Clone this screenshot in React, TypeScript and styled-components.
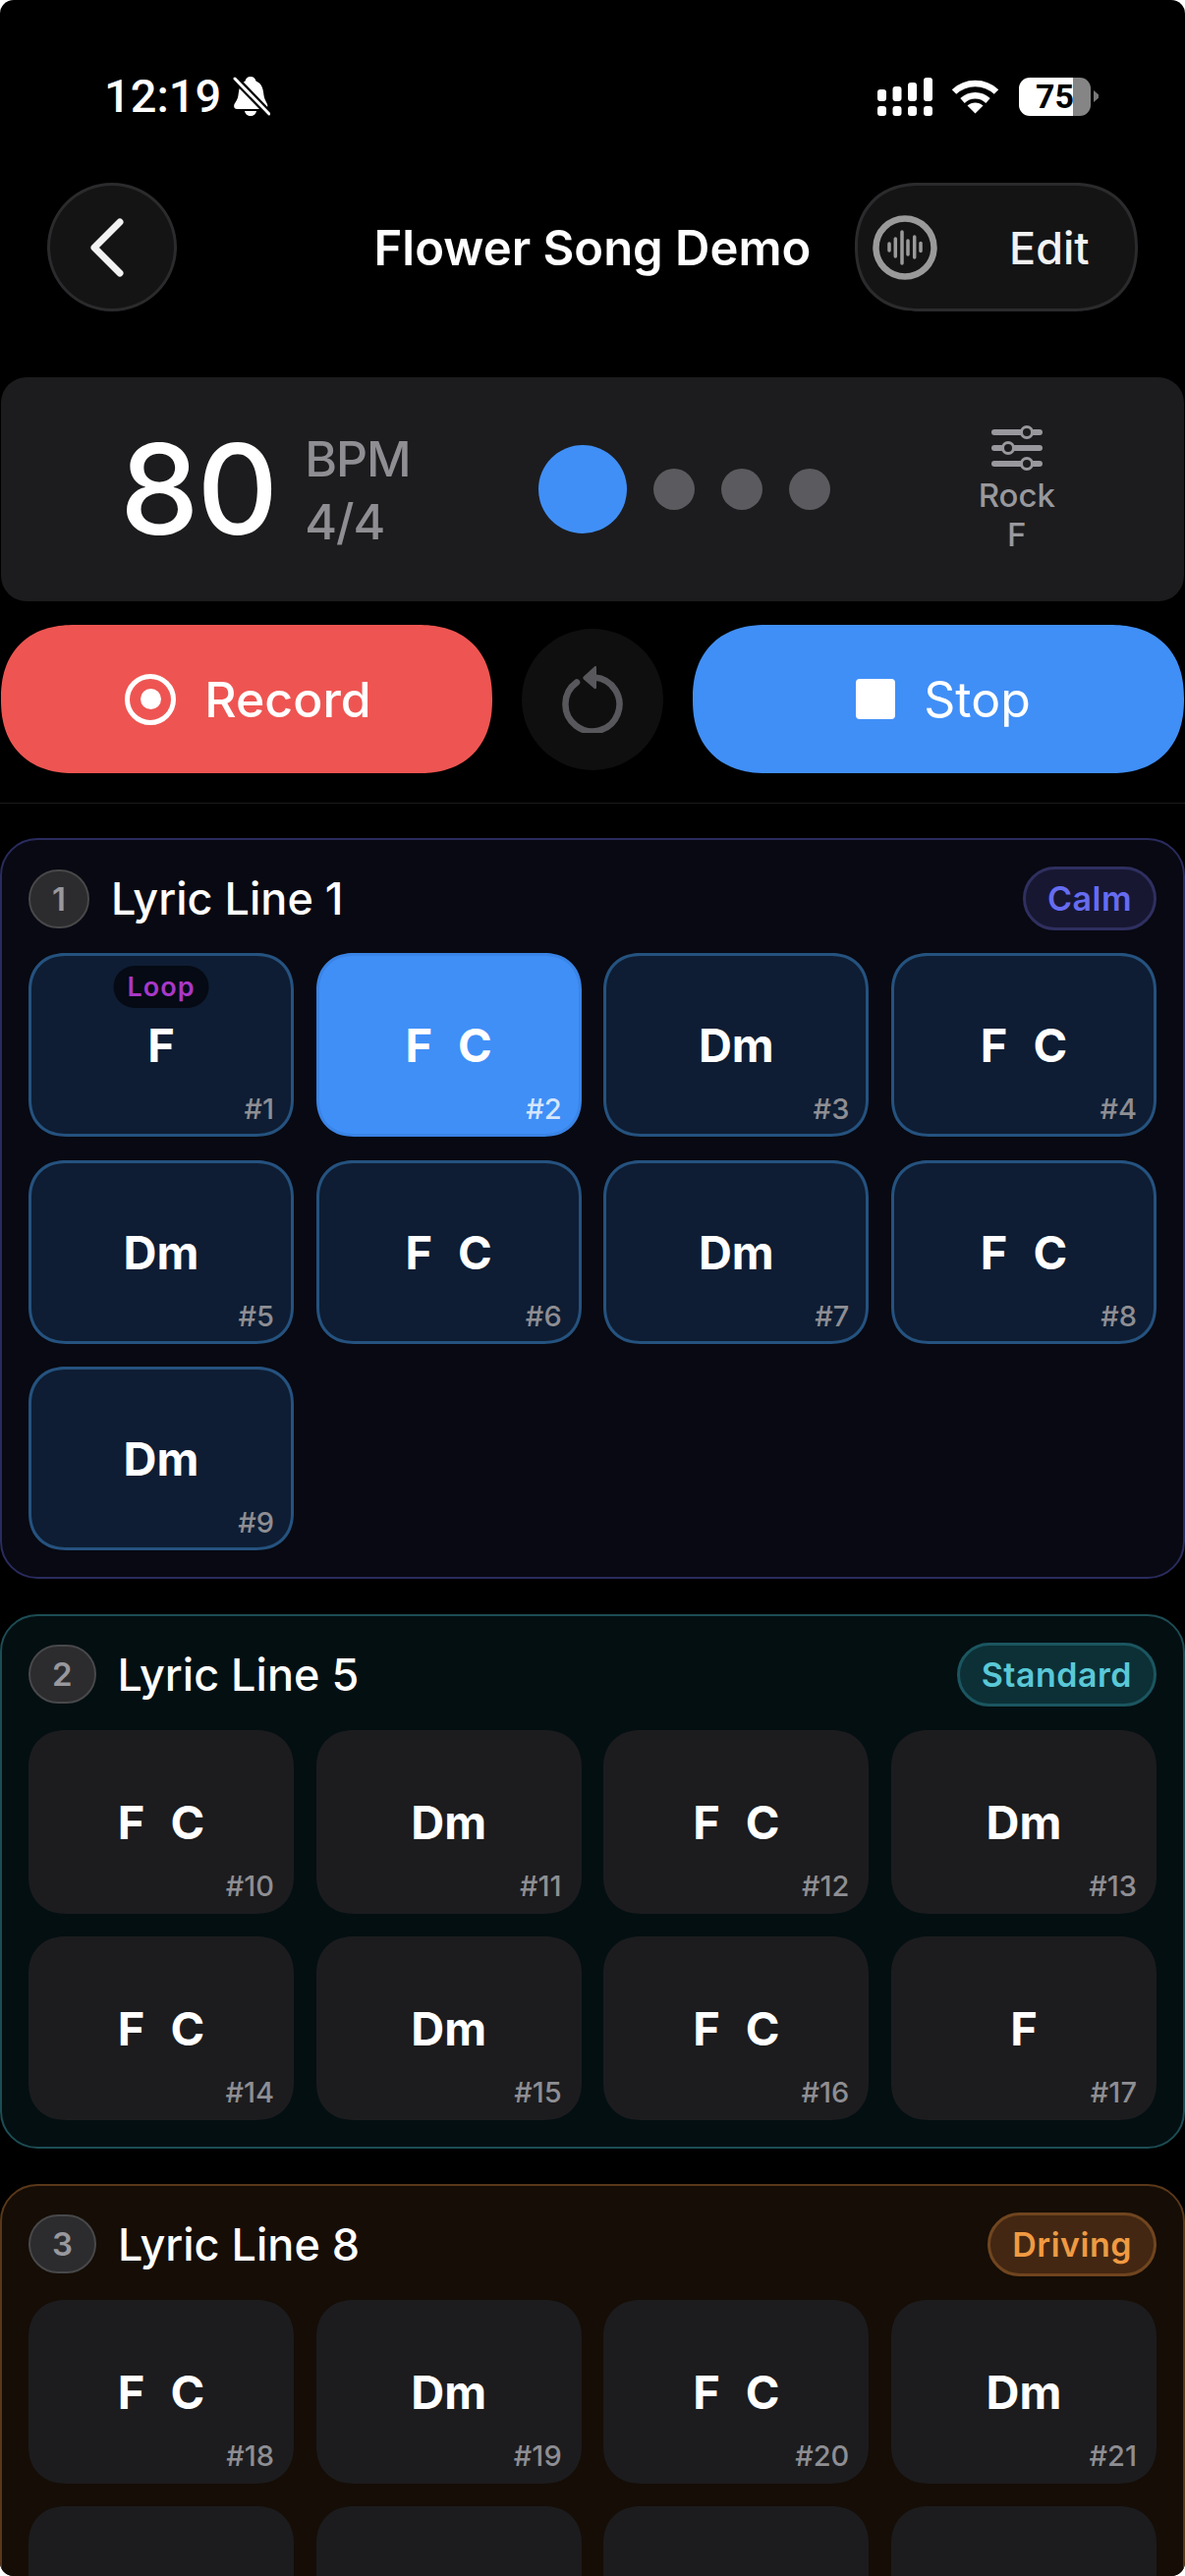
import React from 'react'
import styled, { createGlobalStyle } from 'styled-components'

type Tone = 'calm' | 'standard' | 'driving'

const tones = {
  calm: { bg: '#080912', line: '#2a2b5e', chipBg: '#171732', chipLine: '#2f2f60', chipText: '#666cf0' },
  standard: { bg: '#040f12', line: '#1c4d54', chipBg: '#0c3036', chipLine: '#1b5660', chipText: '#5ac8d6' },
  driving: { bg: '#150d06', line: '#5a3819', chipBg: '#432712', chipLine: '#70451f', chipText: '#f09a42' },
}

const sections: { title: string; tone: Tone; tag: string; start: number; chords: string[]; cue?: boolean }[] = [
  { title: 'Lyric Line 1', tone: 'calm', tag: 'Calm', start: 1, cue: true, chords: ['F', 'F C', 'Dm', 'F C', 'Dm', 'F C', 'Dm', 'F C', 'Dm'] },
  { title: 'Lyric Line 5', tone: 'standard', tag: 'Standard', start: 10, chords: ['F C', 'Dm', 'F C', 'Dm', 'F C', 'Dm', 'F C', 'F'] },
  { title: 'Lyric Line 8', tone: 'driving', tag: 'Driving', start: 18, chords: ['F C', 'Dm', 'F C', 'Dm', 'F C', 'Dm', 'F C', 'Dm'] },
]

const Global = createGlobalStyle`
  html, body {
    margin: 0;
    background: #fff;
  }
  * {
    box-sizing: border-box;
  }
`

const Screen = styled.div`
  width: 1206px;
  height: 2622px;
  overflow: hidden;
  background: #000;
  border-radius: 14px;
  color: #fff;
  font-family: Inter, 'Liberation Sans', sans-serif;
`

const StatusBar = styled.div`
  display: flex;
  justify-content: space-between;
  align-items: center;
  height: 40px;
  margin-top: 78px;
  padding: 0 88px 0 106px;
`

const StatusGroup = styled.div<{ $gap: number }>`
  display: flex;
  align-items: center;
  gap: ${p => p.$gap}px;
`

const Clock = styled.span`
  font-family: Roboto, sans-serif;
  font-size: 47px;
  font-weight: 500;
  line-height: 40px;
`

const Battery = styled.div`
  display: flex;
  align-items: center;
  gap: 3px;
  margin-left: 1px;
`

const BatteryBody = styled.div`
  width: 73px;
  height: 39px;
  padding-left: 17px;
  border-radius: 11px;
  background: linear-gradient(to right, #fff 75.5%, #858585 75.5%);
  color: #000;
  font-family: Roboto, sans-serif;
  font-size: 34px;
  font-weight: 700;
  line-height: 39px;
`

const BatteryNub = styled.span`
  width: 5px;
  height: 12px;
  background: #777;
  clip-path: polygon(0 0, 100% 35%, 100% 65%, 0 100%);
`

const Header = styled.header`
  display: grid;
  grid-template-columns: 1fr auto 1fr;
  align-items: center;
  height: 131px;
  margin-top: 68px;
  padding: 0 48px;
`

const BackButton = styled.button`
  display: flex;
  align-items: center;
  justify-content: center;
  width: 132px;
  height: 131px;
  padding: 0 10px 0 0;
  border: 3px solid #2b2b2d;
  border-radius: 50%;
  background: #141414;
`

const Title = styled.h1`
  margin: 0;
  padding-top: 2px;
  font-size: 49px;
  font-weight: 600;
  white-space: nowrap;
`

const EditPill = styled.button`
  justify-self: end;
  display: flex;
  align-items: center;
  width: 288px;
  height: 131px;
  padding: 0 0 0 15px;
  border: 3px solid #2b2b2d;
  border-radius: 65px;
  corner-shape: superellipse(1.15);
  background: #141414;
  color: #f2f2f2;
  font-family: inherit;
  font-size: 45px;
  font-weight: 500;
`

const EditLabel = styled.span`
  margin-left: 73px;
  padding-top: 2px;
`

const TempoPanel = styled.section`
  display: flex;
  align-items: center;
  height: 228px;
  margin: 67px 1px 0;
  padding: 0 131px 0 121px;
  border-radius: 26px;
  background: #1c1c1e;
`

const Tempo = styled.div`
  font-size: 128px;
  font-weight: 500;
  letter-spacing: -2px;
  line-height: 1;
`

const Meter = styled.div`
  display: flex;
  flex-direction: column;
  gap: 13px;
  margin: 2px 0 0 29px;
  color: #8e8e93;
  font-size: 50px;
  font-weight: 500;
  letter-spacing: -1px;
  line-height: 51px;
`

const Beats = styled.div`
  display: flex;
  align-items: center;
  gap: 27px;
  margin-left: 130px;
`

const Beat = styled.span<{ $on?: boolean }>`
  width: ${p => (p.$on ? 90 : 42)}px;
  height: ${p => (p.$on ? 90 : 42)}px;
  border-radius: 50%;
  background: ${p => (p.$on ? '#408ff7' : '#5a5a5f')};
`

const StyleInfo = styled.div`
  display: flex;
  flex-direction: column;
  align-items: center;
  margin-left: auto;
  color: #98989d;
  font-size: 33px;
  font-weight: 500;
  line-height: 40px;
`

const StyleIcon = styled.svg`
  margin-bottom: 5px;
`

const Transport = styled.div`
  display: flex;
  align-items: center;
  justify-content: space-between;
  height: 151px;
  margin-top: 24px;
  padding: 0 1px;
`

const BigButton = styled.button<{ $color: string; $weight: number; $nudge: number }>`
  display: flex;
  align-items: center;
  justify-content: center;
  gap: 29px;
  width: 500px;
  height: 151px;
  padding: 0 0 0 ${p => p.$nudge}px;
  border: 0;
  border-radius: 75px;
  corner-shape: superellipse(1.2);
  background: ${p => p.$color};
  color: #fff;
  font-family: inherit;
  font-size: 50px;
  font-weight: ${p => p.$weight};
`

const RecordRing = styled.span`
  display: flex;
  align-items: center;
  justify-content: center;
  width: 52px;
  height: 52px;
  border: 5px solid #fff;
  border-radius: 50%;

  &::after {
    content: '';
    width: 21px;
    height: 21px;
    border-radius: 50%;
    background: #fff;
  }
`

const StopSquare = styled.span`
  width: 40px;
  height: 41px;
  border-radius: 4px;
  background: #fff;
`

const ResetButton = styled.button`
  display: flex;
  align-items: center;
  justify-content: center;
  width: 144px;
  height: 144px;
  padding: 0 2px 0 0;
  border: 0;
  border-radius: 50%;
  background: #0f0f0f;
`

const Divider = styled.hr`
  height: 1px;
  margin: 30px 0 0;
  border: 0;
  background: #1a1a1c;
`

const SectionList = styled.main`
  display: flex;
  flex-direction: column;
  gap: 35.5px;
  padding-top: 35px;
`

const Section = styled.section<{ $tone: Tone }>`
  padding: 27px;
  border: 2px solid ${p => tones[p.$tone].line};
  border-radius: 38px;
  background: ${p => tones[p.$tone].bg};
`

const SectionHead = styled.div<{ $tone: Tone }>`
  display: flex;
  align-items: center;
  justify-content: space-between;
  height: 65px;
  margin-bottom: ${p => (p.$tone === 'calm' ? 23 : 24)}px;
`

const SectionName = styled.div`
  display: flex;
  align-items: center;
  gap: 22px;
  font-size: 45px;
  font-weight: 500;
`

const Index = styled.span`
  display: flex;
  align-items: center;
  justify-content: center;
  height: 60px;
  padding: 0 22px;
  border: 2px solid #48484a;
  border-radius: 30px;
  background: #2c2c2e;
  color: #98989d;
  font-size: 33px;
  font-weight: 600;
`

const Tag = styled.span<{ $tone: Tone }>`
  display: flex;
  align-items: center;
  height: 65px;
  padding: 0 22px;
  border: 3px solid ${p => tones[p.$tone].chipLine};
  border-radius: 33px;
  background: ${p => tones[p.$tone].chipBg};
  color: ${p => tones[p.$tone].chipText};
  font-size: 34px;
  font-weight: 600;
  letter-spacing: 0.5px;
`

const Grid = styled.div`
  display: grid;
  grid-template-columns: repeat(4, 270px);
  justify-content: space-between;
  row-gap: 23.5px;
`

const Cell = styled.div<{ $state: 'idle' | 'queued' | 'playing' }>`
  position: relative;
  display: flex;
  align-items: center;
  justify-content: center;
  gap: 26px;
  height: 187px;
  border-radius: 38px;
  corner-shape: superellipse(1.15);
  border: 3px solid ${p => (p.$state === 'queued' ? '#25527f' : p.$state === 'playing' ? '#3a84e6' : 'transparent')};
  background: ${p => (p.$state === 'queued' ? '#0e1d33' : p.$state === 'playing' ? '#408ff7' : '#1c1c1e')};
  font-size: 47px;
  font-weight: 700;
`

const CellNumber = styled.span<{ $light?: boolean }>`
  position: absolute;
  right: 17px;
  bottom: 10px;
  color: ${p => (p.$light ? 'rgba(255,255,255,0.8)' : '#8e8e93')};
  font-size: 29px;
  font-weight: 500;
  line-height: 30px;
`

const LoopBadge = styled.span`
  position: absolute;
  top: 10px;
  left: 50%;
  transform: translateX(-50%);
  padding: 0 14px;
  border-radius: 22px;
  background: #050a14;
  color: #a838c8;
  font-size: 27px;
  font-weight: 600;
  letter-spacing: 1px;
  line-height: 43px;
`

const BellOff = () => (
  <svg width="38" height="41" viewBox="0 0 38 41">
    <path d="M18 0c3 0 5 2 5.500 4.500C30 7 31 14 31.500 19c.3 3 2 6 3.500 9 1 3-.5 5-3 5H4.500c-3 0-4-2-3-5 1.500-3 3.500-5 4-9C6 14 7 7 12.500 4.500 13 2 15 0 18 0z" fill="#fff" />
    <path d="M12 35h12c-.5 3-3 5-6 5s-5.500-2-6-5z" fill="#fff" />
    <path d="M2 2l35 36" stroke="#000" strokeWidth="7.500" />
    <path d="M2 2l35 36" stroke="#fff" strokeWidth="3" strokeLinecap="round" />
  </svg>
)

const Signal = () => (
  <svg width="56" height="39" viewBox="0 0 56 39" fill="#fff">
    <rect x="0" y="12" width="9" height="12" rx="3" />
    <rect x="15.500" y="9" width="9" height="15" rx="3" />
    <rect x="31" y="5" width="9" height="19" rx="3" />
    <rect x="47" y="0" width="9" height="24" rx="3" />
    <rect x="0" y="29" width="9" height="10" rx="3" />
    <rect x="15.500" y="29" width="9" height="10" rx="3" />
    <rect x="31" y="29" width="9" height="10" rx="3" />
    <rect x="47" y="29" width="9" height="10" rx="3" />
  </svg>
)

const Wifi = () => (
  <svg width="49" height="36" viewBox="0 0 49 36" fill="none" stroke="#fff" strokeWidth="6.500">
    <path d="M3 13.500C15 2 34 2 46 13.500" />
    <path d="M11.500 22.500C19 15.500 30 15.500 37.500 22.500" />
    <path d="M24.500 35.500L16.500 27.500C21 23.500 28 23.500 32.500 27.500Z" fill="#fff" stroke="none" />
  </svg>
)

const Chevron = () => (
  <svg width="40" height="64" viewBox="0 0 40 64" fill="none">
    <path d="M33 6L7 32l26 26" stroke="#f2f2f2" strokeWidth="7" strokeLinecap="round" strokeLinejoin="round" />
  </svg>
)

const WaveBadge = () => (
  <svg width="66" height="66" viewBox="0 0 66 66" fill="none" stroke="#9a9a9a">
    <circle cx="33" cy="33" r="29.500" strokeWidth="6.500" />
    <g strokeWidth="3.500" strokeLinecap="round">
      <path d="M17 29v7" />
      <path d="M23.300 24v18" />
      <path d="M30 17v32" />
      <path d="M36 26v14" />
      <path d="M42.700 22v21" />
      <path d="M49 28.500v8" />
    </g>
  </svg>
)

const Sliders = () => (
  <StyleIcon width="52" height="46" viewBox="0 0 52 46" fill="none" stroke="#98989d">
    <g strokeWidth="6" strokeLinecap="round">
      <path d="M3 7h46" />
      <path d="M3 23h46" />
      <path d="M3 39h46" />
    </g>
    <g fill="#1c1c1e" strokeWidth="3">
      <circle cx="36" cy="7" r="5.500" />
      <circle cx="17" cy="23" r="5.500" />
      <circle cx="36" cy="39" r="5.500" />
    </g>
  </StyleIcon>
)

const ResetIcon = () => (
  <svg width="64" height="68" viewBox="0 0 64 68" fill="none">
    <path d="M17 16.500A27.500 27.500 0 1 0 35 11.500" stroke="#58585c" strokeWidth="6.500" strokeLinecap="round" />
    <path d="M37 1v21c0 1-1 1.500-2 1L24 13.500c-1-1-1-2 0-3L35 .5c1-.8 2-.5 2 .5z" fill="#58585c" />
  </svg>
)

const Chord = ({ name }: { name: string }) => (
  <>
    {name.split(' ').map(part => (
      <span key={part}>{part}</span>
    ))}
  </>
)

const App = () => {
  return (
    <Screen>
      <Global />
      <StatusBar>
        <StatusGroup $gap={12}>
          <Clock>12:19</Clock>
          <BellOff />
        </StatusGroup>
        <StatusGroup $gap={19}>
          <Signal />
          <Wifi />
          <Battery>
            <BatteryBody>75</BatteryBody>
            <BatteryNub />
          </Battery>
        </StatusGroup>
      </StatusBar>

      <Header>
        <BackButton>
          <Chevron />
        </BackButton>
        <Title>Flower Song Demo</Title>
        <EditPill>
          <WaveBadge />
          <EditLabel>Edit</EditLabel>
        </EditPill>
      </Header>

      <TempoPanel>
        <Tempo>80</Tempo>
        <Meter>
          <span>BPM</span>
          <span>4/4</span>
        </Meter>
        <Beats>
          <Beat $on />
          <Beat />
          <Beat />
          <Beat />
        </Beats>
        <StyleInfo>
          <Sliders />
          <span>Rock</span>
          <span>F</span>
        </StyleInfo>
      </TempoPanel>

      <Transport>
        <BigButton $color="#ee5552" $weight={500} $nudge={3}>
          <RecordRing />
          Record
        </BigButton>
        <ResetButton>
          <ResetIcon />
        </ResetButton>
        <BigButton $color="#408ff7" $weight={400} $nudge={10}>
          <StopSquare />
          Stop
        </BigButton>
      </Transport>
      <Divider />

      <SectionList>
        {sections.map((section, i) => (
          <Section key={section.title} $tone={section.tone}>
            <SectionHead $tone={section.tone}>
              <SectionName>
                <Index>{i + 1}</Index>
                {section.title}
              </SectionName>
              <Tag $tone={section.tone}>{section.tag}</Tag>
            </SectionHead>
            <Grid>
              {section.chords.map((chord, c) => {
                const n = section.start + c
                const state = n === 2 ? 'playing' : section.tone === 'calm' ? 'queued' : 'idle'
                return (
                  <Cell key={n} $state={state}>
                    {section.cue && c === 0 && <LoopBadge>Loop</LoopBadge>}
                    <Chord name={chord} />
                    <CellNumber $light={n === 2}>#{n}</CellNumber>
                  </Cell>
                )
              })}
            </Grid>
          </Section>
        ))}
      </SectionList>
    </Screen>
  )
}

export default App
